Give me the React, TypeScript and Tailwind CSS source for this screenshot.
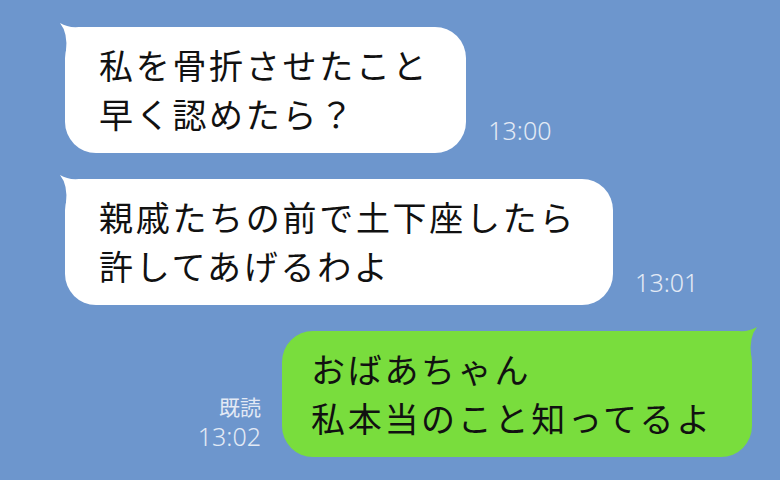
import React from "react";

const jp = { fontFamily: '"Noto Sans CJK JP", "Noto Sans", sans-serif' };
const num = { fontFamily: '"Noto Sans", sans-serif' };

function Tail({ color, right }: { color: string; right?: boolean }) {
  return (
    <svg
      width="40"
      height="40"
      viewBox="0 0 40 40"
      className={
        right
          ? "absolute -right-[8px] -top-[6px] -scale-x-100"
          : "absolute -left-[8px] -top-[6px]"
      }
    >
      <path d="M3 2 Q11 12 9 30 L9 40 L40 40 L40 6 L22 6 Q11 7 3 2 Z" fill={color} />
    </svg>
  );
}

function Bubble({
  lines,
  color,
  right,
  className,
}: {
  lines: string[];
  color: string;
  right?: boolean;
  className: string;
}) {
  return (
    <div
      className={`relative rounded-[31px] text-[34px] leading-[49px] tracking-[2.7px] text-[#111] ${className}`}
      style={{ ...jp, backgroundColor: color }}
    >
      <Tail color={color} right={right} />
      <div className="relative">
        {lines.map((l) => (
          <div key={l} className="whitespace-nowrap">
            {l}
          </div>
        ))}
      </div>
    </div>
  );
}

export default function App() {
  return (
    <div className="w-[780px] h-[480px] overflow-hidden bg-[#6d96cd]">
      <div className="flex items-end gap-[22px] pl-[65px] pt-[27px]">
        <Bubble
          lines={["私を骨折させたこと", "早く認めたら？"]}
          color="#ffffff"
          className="pl-[34px] pr-[37px] pt-[13px] pb-[15px]"
        />
        <span className="mb-[9px] text-[25px] leading-[28px] font-light text-[#e3eaf5]" style={num}>
          13:00
        </span>
      </div>
      <div className="flex items-end gap-[22px] pl-[65px] pt-[26px]">
        <Bubble
          lines={["親戚たちの前で土下座したら", "許してあげるわよ"]}
          color="#ffffff"
          className="pl-[34px] pr-[37px] pt-[13px] pb-[15px]"
        />
        <span className="mb-[9px] text-[25px] leading-[28px] font-light text-[#e3eaf5]" style={num}>
          13:01
        </span>
      </div>
      <div className="flex items-end justify-end gap-[21px] pr-[28px] pt-[26px]">
        <div className="mb-[7px] flex flex-col items-end gap-[2px] text-[#e3eaf5]">
          <span className="text-[21px] leading-[27px]" style={jp}>
            既読
          </span>
          <span className="text-[25px] leading-[28px] font-light" style={num}>
            13:02
          </span>
        </div>
        <Bubble
          lines={["おばあちゃん", "私本当のこと知ってるよ"]}
          color="#79dd3d"
          right
          className="pl-[29px] pr-[39px] pt-[13px] pb-[15px]"
        />
      </div>
    </div>
  );
}
